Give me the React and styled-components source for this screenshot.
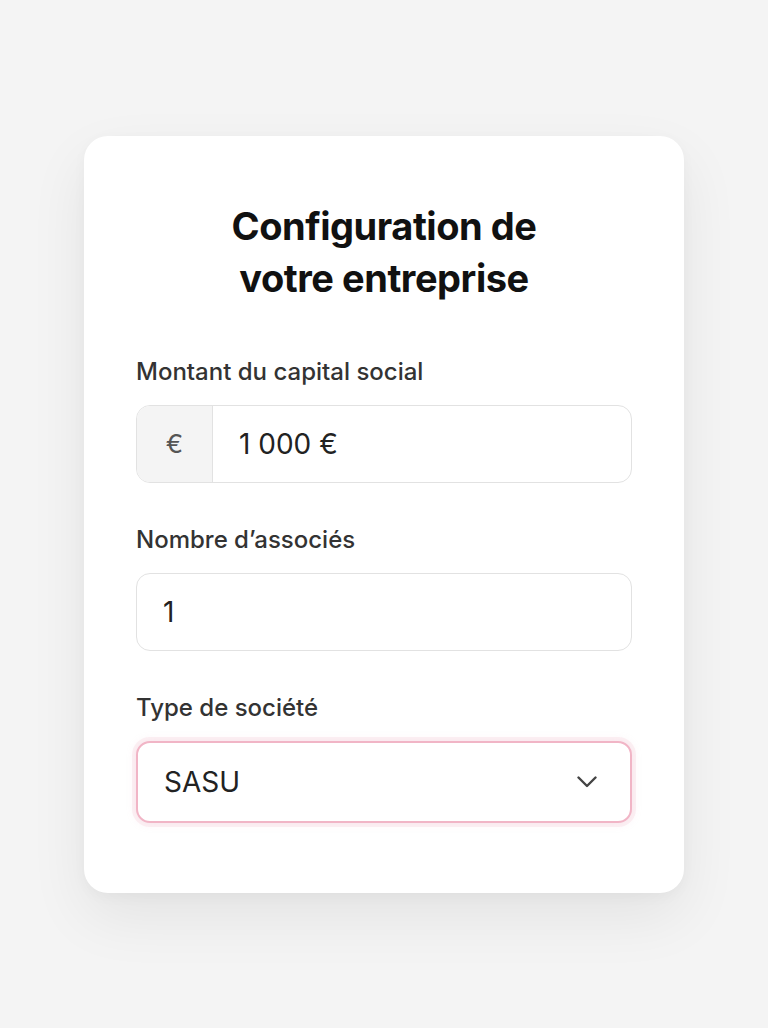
import React from 'react';
import styled, { createGlobalStyle } from 'styled-components';

const GlobalStyle = createGlobalStyle`
  html, body {
    margin: 0;
    padding: 0;
    background: #f4f4f4;
    font-family: Inter, "Noto Sans", sans-serif;
  }
  * { box-sizing: border-box; }
`;

const Page = styled.div`
  min-height: 100vh;
  display: flex;
  align-items: center;
  justify-content: center;
`;

const Card = styled.div`
  width: 600px;
  background: #ffffff;
  border-radius: 24px;
  padding: 64px 52px 70px;
  box-shadow: 0 24px 60px rgba(0, 0, 0, 0.07), 0 4px 14px rgba(0, 0, 0, 0.03);
`;

const Title = styled.h1`
  margin: 0 0 51px;
  text-align: center;
  font-size: 38px;
  line-height: 52px;
  font-weight: 700;
  letter-spacing: -0.012em;
  color: #111111;
`;

const Field = styled.div`
  display: flex;
  flex-direction: column;
  margin-bottom: 40px;
  &:last-child { margin-bottom: 0; }
`;

const Label = styled.label`
  font-size: 24px;
  line-height: 34px;
  font-weight: 500;
  color: #333333;
  margin-bottom: 16px;
`;

const InputBox = styled.div`
  display: flex;
  align-items: stretch;
  height: ${p => (p.$focused ? '82px' : '78px')};
  border: ${p => (p.$focused ? '2px solid #f1b5c6' : '1.5px solid #e2e2e2')};
  border-radius: 14px;
  overflow: hidden;
  background: #ffffff;
  box-shadow: ${p => (p.$focused ? '0 0 0 4px rgba(241, 181, 198, 0.18), 0 0 10px rgba(241, 181, 198, 0.25)' : 'none')};
`;

const Prefix = styled.div`
  width: 76px;
  flex: none;
  display: flex;
  align-items: center;
  justify-content: center;
  background: #f4f4f4;
  border-right: 1.5px solid #e2e2e2;
  font-size: 26px;
  color: #555555;
`;

const Value = styled.div`
  flex: 1;
  display: flex;
  align-items: center;
  padding: 0 ${p => (p.$hasIcon ? '33px' : '24px')} 0 26px;
  font-size: 28px;
  color: #222222;
`;

const ValueText = styled.span`
  flex: 1;
`;

const Chevron = () => (
  <svg width="20" height="12" viewBox="0 0 20 12" fill="none">
    <polyline points="1.5,1.5 10,10 18.5,1.5" stroke="#444444" strokeWidth="2.4" strokeLinecap="round" strokeLinejoin="round" />
  </svg>
);

const App = () => {
  return (
    <>
      <GlobalStyle />
      <Page>
        <Card>
          <Title>Configuration de<br />votre entreprise</Title>
          <Field>
            <Label>Montant du capital social</Label>
            <InputBox>
              <Prefix>€</Prefix>
              <Value><ValueText>1&nbsp;000 €</ValueText></Value>
            </InputBox>
          </Field>
          <Field>
            <Label>Nombre d’associés</Label>
            <InputBox>
              <Value><ValueText>1</ValueText></Value>
            </InputBox>
          </Field>
          <Field>
            <Label>Type de société</Label>
            <InputBox $focused>
              <Value $hasIcon><ValueText>SASU</ValueText><Chevron /></Value>
            </InputBox>
          </Field>
        </Card>
      </Page>
    </>
  );
};

export default App;
